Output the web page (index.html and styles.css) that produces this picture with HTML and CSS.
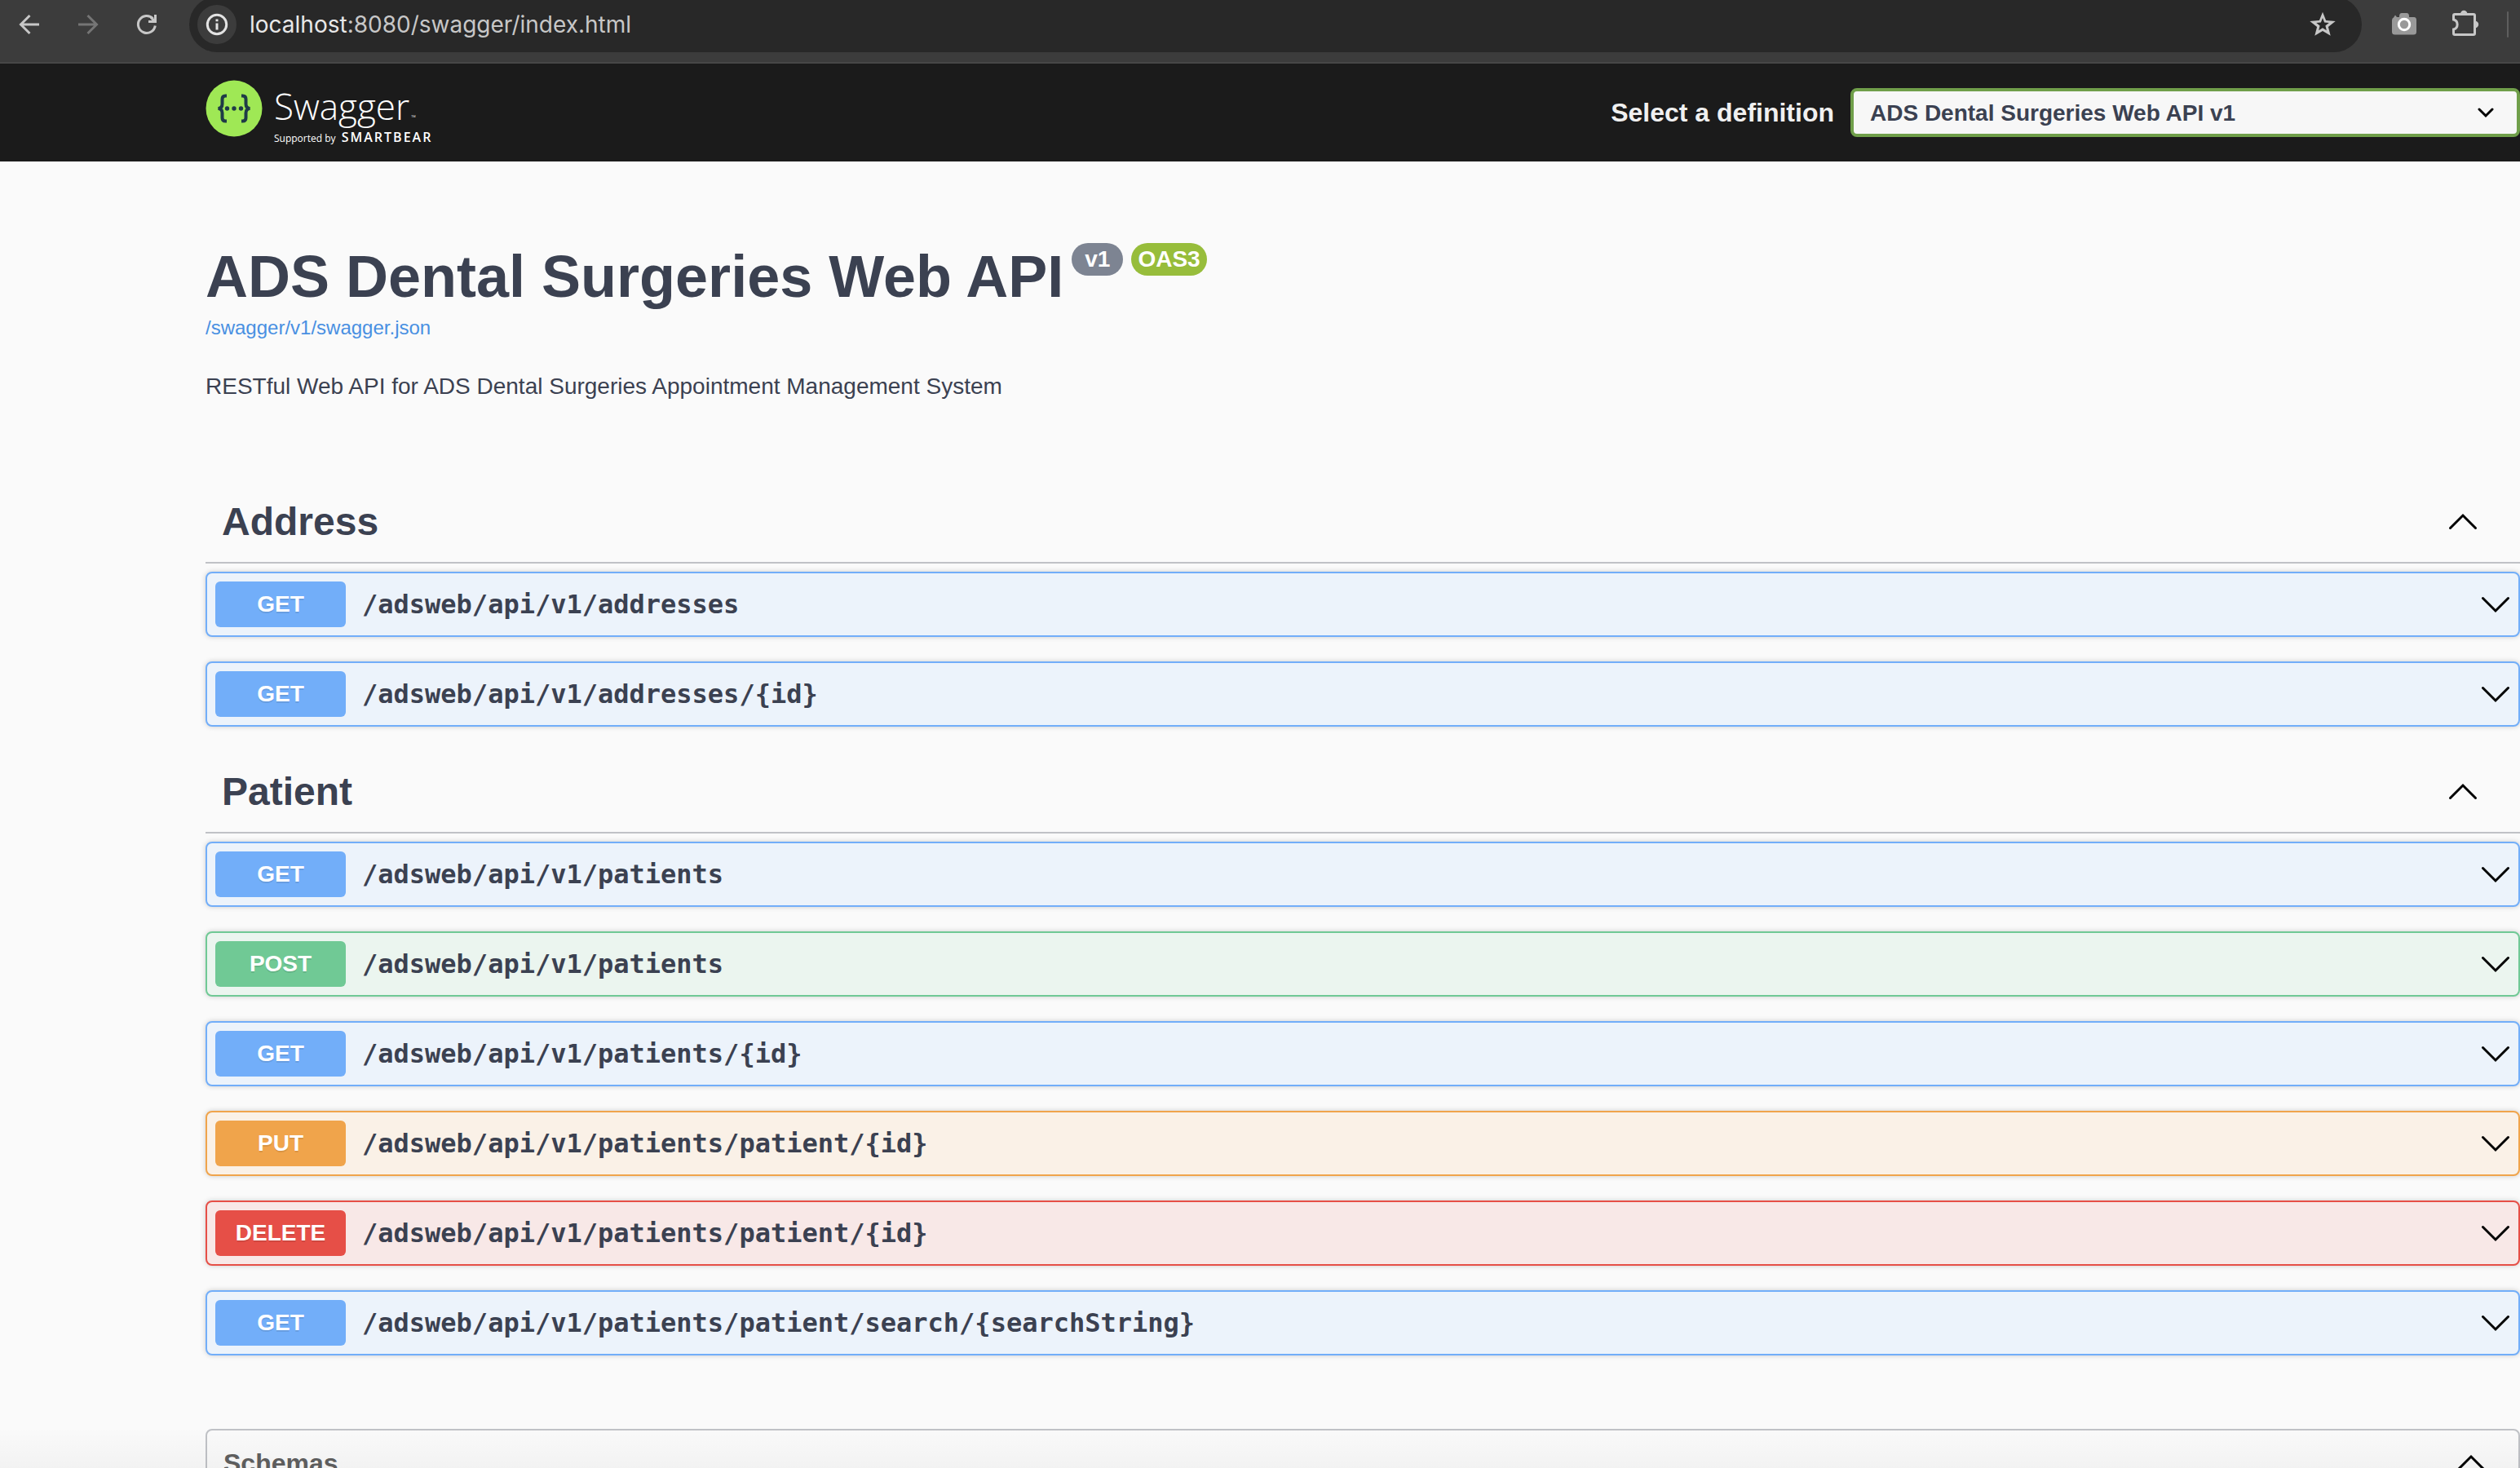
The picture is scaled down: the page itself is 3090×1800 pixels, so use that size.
FILE: index.html
```html
<!DOCTYPE html>
<html lang="en">
<head>
<meta charset="utf-8">
<title>Swagger UI</title>
<link rel="stylesheet" href="styles.css">
</head>
<body>
<svg class="sprite" aria-hidden="true">
  <symbol id="chevron" viewBox="0 0 40 40"><path d="M4.500 12.500 20 28 35.500 12.500"/></symbol>
</svg>

<div class="toolbar">
  <nav class="toolbar-nav">
    <button class="tool" aria-label="Back"><svg viewBox="0 0 32 32"><path d="M28 16H6M16.500 5 5.500 16l11 11"/></svg></button>
    <button class="tool tool-off" aria-label="Forward"><svg viewBox="0 0 32 32"><path d="M4 16h22M15.500 5l11 11-11 11"/></svg></button>
    <button class="tool" aria-label="Reload"><svg viewBox="0 0 32 32"><path d="M26.300 17.500A10.500 10.500 0 1 1 23.500 8.700"/><path class="solid" d="M25 4h3v10H18v-3h4.500L20 8.500l2-2 3 2.500Z"/></svg></button>
  </nav>
  <div class="omnibox">
    <button class="site-info" aria-label="Site information"><svg viewBox="0 0 32 32"><circle cx="16" cy="16" r="11.700"/><path d="M16 14.500v8M16 9.500v2.800"/></svg></button>
    <span class="url"><span class="url-host">localhost</span>:8080/swagger/index.html</span>
    <button class="tool" aria-label="Bookmark"><svg viewBox="0 0 32 32"><path class="solid" fill-rule="evenodd" d="M16 .700 20.100 11 31.700 11.900 22.900 19.100 25.700 29.800 16 24 6.300 29.800 9.100 19.100.300 11.900 11.900 11ZM16 8 13.900 13.400 8.200 13.900 12.600 17.600 11.200 23.300 16 20.300 20.800 23.300 19.400 17.600 23.800 13.900 18.100 13.400Z"/></svg></button>
  </div>
  <div class="extensions">
    <button class="tool" aria-label="Screenshot"><svg viewBox="0 0 32 32"><path class="camera" d="M1 11q0-3 2-3.500l2-3 2 2.500h3V6q0-4 3-4h6q3 0 3 4v1h6q3 0 3 3.500V25q0 3.500-3.500 3.500h-23Q1 28.500 1 25Z"/><circle class="lens" cx="16" cy="16" r="6.700"/></svg></button>
    <button class="tool tool-puzzle" aria-label="Extensions"><svg viewBox="0 0 36 36"><path d="M6 5.500h23q1.500 0 1.500 1.500v22q0 1.500-1.500 1.500H6q-1.500 0-1.500-1.500v-5a6.200 6.200 0 0 0 0-12V7q0-1.500 1.500-1.500Z"/><path class="solid" d="M13 5a4.200 4.200 0 0 1 8.400 0ZM31 13.800a4.200 4.200 0 0 1 0 8.400Z"/></svg></button>
    <span class="divider"></span>
  </div>
</div>

<div class="page">
  <header class="topbar">
    <a class="logo" href="#" aria-label="Swagger, supported by SmartBear">
      <svg class="logo-mark" viewBox="0 0 70 70"><circle class="disc" cx="35" cy="35" r="34.500"/>
        <path class="brace" d="M26 19.500h-1.500q-4 0-4 4v6q0 5-5 5.500 5 .500 5 5.500v6q0 4 4 4H26M44 19.500h1.500q4 0 4 4v6q0 5 5 5.500-5 .500-5 5.500v6q0 4-4 4H44"/>
        <g class="dots"><circle cx="26.500" cy="35" r="2.700"/><circle cx="35" cy="35" r="2.700"/><circle cx="43.500" cy="35" r="2.700"/></g></svg>
      <span class="logo-words">
        <span class="logo-name">Swagger<small>™</small></span>
        <span class="logo-by">Supported by <b>SMARTBEAR</b></span>
      </span>
    </a>
    <label class="definition-label" for="definition">Select a definition</label>
    <span class="select-wrap">
      <select id="definition"><option>ADS Dental Surgeries Web API v1</option></select>
      <svg class="select-arrow" viewBox="0 0 20 20"><path d="M2 6l8 8 8-8"/></svg>
    </span>
  </header>

  <main class="content">
    <section class="info">
      <h1>ADS Dental Surgeries Web API<span class="badges"><span class="badge">v1</span><span class="badge badge-oas">OAS3</span></span></h1>
      <a class="spec-link" href="#">/swagger/v1/swagger.json</a>
      <p>RESTful Web API for ADS Dental Surgeries Appointment Management System</p>
    </section>

    <section class="tag">
      <h2>Address<button class="toggle up" aria-label="Collapse Address"><svg><use href="#chevron"/></svg></button></h2>
      <div class="op get"><span class="method">GET</span><span class="path">/adsweb/api/v1/addresses</span><button class="toggle" aria-label="Expand"><svg><use href="#chevron"/></svg></button></div>
      <div class="op get"><span class="method">GET</span><span class="path">/adsweb/api/v1/addresses/{id}</span><button class="toggle" aria-label="Expand"><svg><use href="#chevron"/></svg></button></div>
    </section>

    <section class="tag">
      <h2>Patient<button class="toggle up" aria-label="Collapse Patient"><svg><use href="#chevron"/></svg></button></h2>
      <div class="op get"><span class="method">GET</span><span class="path">/adsweb/api/v1/patients</span><button class="toggle" aria-label="Expand"><svg><use href="#chevron"/></svg></button></div>
      <div class="op post"><span class="method">POST</span><span class="path">/adsweb/api/v1/patients</span><button class="toggle" aria-label="Expand"><svg><use href="#chevron"/></svg></button></div>
      <div class="op get"><span class="method">GET</span><span class="path">/adsweb/api/v1/patients/{id}</span><button class="toggle" aria-label="Expand"><svg><use href="#chevron"/></svg></button></div>
      <div class="op put"><span class="method">PUT</span><span class="path">/adsweb/api/v1/patients/patient/{id}</span><button class="toggle" aria-label="Expand"><svg><use href="#chevron"/></svg></button></div>
      <div class="op delete"><span class="method">DELETE</span><span class="path">/adsweb/api/v1/patients/patient/{id}</span><button class="toggle" aria-label="Expand"><svg><use href="#chevron"/></svg></button></div>
      <div class="op get"><span class="method">GET</span><span class="path">/adsweb/api/v1/patients/patient/search/{searchString}</span><button class="toggle" aria-label="Expand"><svg><use href="#chevron"/></svg></button></div>
    </section>

    <section class="schemas">
      <h3>Schemas<button class="toggle up" aria-label="Collapse Schemas"><svg><use href="#chevron"/></svg></button></h3>
    </section>
  </main>
</div>
</body>
</html>
```

FILE: styles.css
```css
* { box-sizing: border-box; }

body {
  margin: 0;
  height: 100vh;
  display: flex;
  flex-direction: column;
  overflow: hidden;
  background: #fafafa;
  color: #3b4151;
  font-family: "Liberation Sans", Arial, sans-serif;
}

h1, h2, h3, p { margin: 0; }

button {
  padding: 0;
  border: 0;
  background: none;
  color: inherit;
}

svg {
  display: block;
  fill: none;
  stroke: currentColor;
}

.sprite { display: none; }

/* Browser toolbar */
.toolbar {
  flex: none;
  display: flex;
  align-items: flex-start;
  height: 78px;
  background: #3c3c3c;
  border-bottom: 2px solid #474747;
  color: #c7c7c7;
}

.toolbar-nav {
  display: flex;
  gap: 40px;
  width: 232px;
  padding: 14px 20px;
}

.tool svg {
  height: 32px;
  width: 32px;
  stroke-width: 3;
}

.tool-off { color: #757575; }

.tool .solid { fill: currentColor; stroke: none; }

.omnibox {
  flex: 1;
  display: flex;
  align-items: center;
  height: 68px;
  margin-top: -4px;
  padding: 0 32px 0 10px;
  border-radius: 34px;
  background: #282828;
}

.site-info {
  width: 48px;
  height: 48px;
  margin-right: 16px;
  padding: 8px;
  border-radius: 50%;
  background: #3c3c3c;
  color: #e3e3e3;
}

.site-info svg { stroke-width: 3; }

.url {
  flex: 1;
  font: 28px/36px Inter, sans-serif;
}

.url-host { color: #e8e8e8; }

.extensions {
  display: flex;
  align-items: center;
  gap: 40px;
  width: 194px;
  padding: 12px 14px 12px 36px;
}

.tool-puzzle svg {
  width: 36px;
  height: 36px;
}

.camera { fill: #999; stroke: none; }

.lens { fill: #999; stroke: #fff; stroke-width: 3; }

.divider {
  width: 4px;
  height: 32px;
  margin-left: -6px;
  border-radius: 2px;
  background: #5e5e5e;
}

/* Swagger page */
.page {
  flex: 1;
  min-height: 0;
  overflow: hidden;
  position: relative;
}

.page::after {
  content: "";
  position: absolute;
  inset: auto 0 0;
  height: 50px;
  background: linear-gradient(transparent, rgba(0, 0, 0, 0.03));
}

.topbar {
  display: flex;
  align-items: center;
  height: 120px;
  padding-left: 252px;
  background: #1b1b1b;
}

.logo {
  display: flex;
  align-self: flex-start;
  gap: 14px;
  margin-right: auto;
  padding-top: 20px;
  color: #fff;
  text-decoration: none;
  font-family: "Open Sans", sans-serif;
}

.logo-mark { width: 70px; height: 70px; stroke: none; }
.logo-mark .brace { stroke: #1f3b47; stroke-width: 4; }
.disc { fill: #9fe855; }
.dots { fill: #1f3b47; }

.logo-words {
  display: flex;
  flex-direction: column;
  padding-top: 8px;
}

.logo-name { font-size: 44px; font-weight: 300; line-height: 48px; }
.logo-name small { font-size: 8px; line-height: 8px; margin-left: 2px; }
.logo-by { font-size: 12px; line-height: 28px; }
.logo-by b { margin-left: 4px; font-size: 16px; font-weight: 600; letter-spacing: 2px; }

.definition-label {
  margin-right: 20px;
  color: #f0f0f0;
  font-size: 32px;
  font-weight: bold;
}

.select-wrap {
  position: relative;
  width: 821px;
}

.select-wrap select {
  display: block;
  appearance: none;
  width: 100%;
  height: 60px;
  padding: 0 20px;
  border: 4px solid #709f4a;
  border-radius: 8px;
  background: #f7f7f7;
  color: #3b4151;
  font: bold 28px "Liberation Sans", Arial, sans-serif;
}

.select-arrow {
  position: absolute;
  right: 32px;
  top: 20px;
  width: 20px;
  height: 20px;
  color: #000;
  stroke-width: 3;
  stroke-linecap: round;
  pointer-events: none;
}

.content { padding-left: 252px; }

.info { padding: 100px 0 98px; }

.info h1 {
  display: flex;
  align-items: flex-start;
  font-size: 72px;
  line-height: 82px;
}

.badges {
  display: flex;
  gap: 10px;
  margin-left: 10px;
}

.badge {
  height: 40px;
  padding: 0 16px;
  border-radius: 20px;
  background: #7d8492;
  color: #fff;
  font-size: 28px;
  line-height: 40px;
}

.badge-oas { padding: 0 8px; background: #97bd3b; }

.spec-link {
  display: block;
  margin-top: 8px;
  color: #4990e2;
  font-size: 24px;
  line-height: 28px;
  text-decoration: none;
}

.info p {
  margin-top: 40px;
  font-size: 28px;
  line-height: 36px;
}

.tag h2 {
  display: flex;
  justify-content: space-between;
  align-items: center;
  margin-bottom: 10px;
  padding: 20px 50px 20px 20px;
  border-bottom: 2px solid rgba(59, 65, 81, 0.3);
  font-size: 48px;
  line-height: 59px;
}

.toggle {
  width: 40px;
  height: 40px;
  color: #000;
}

.toggle svg {
  width: 40px;
  height: 40px;
  stroke-width: 3;
  stroke-linecap: round;
}

.up svg { transform: rotate(180deg); }

.op {
  display: flex;
  align-items: center;
  height: 80px;
  margin-bottom: 30px;
  padding: 0 8px 0 10px;
  border: 2px solid;
  border-radius: 8px;
  box-shadow: 0 0 6px rgba(0, 0, 0, 0.19);
}

.method {
  width: 160px;
  border-radius: 6px;
  color: #fff;
  font-size: 28px;
  font-weight: bold;
  line-height: 56px;
  text-align: center;
  text-shadow: 0 2px 0 rgba(0, 0, 0, 0.1);
}

.path {
  flex: 1;
  padding-left: 20px;
  color: #3b4151;
  font: bold 32px/40px "DejaVu Sans Mono", monospace;
}

.get { border-color: #72aef9; background: #ecf3fb; }
.get .method { background: #72aef9; }
.post { border-color: #70c995; background: #ebf5ef; }
.post .method { background: #70c995; }
.put { border-color: #f0a44b; background: #faf1e7; }
.put .method { background: #f0a44b; }
.delete { border-color: #e64f47; background: #f8e8e7; }
.delete .method { background: #e64f47; }

.schemas {
  margin-top: 90px;
  border: 2px solid rgba(59, 65, 81, 0.3);
  border-radius: 8px;
}

.schemas h3 {
  display: flex;
  justify-content: space-between;
  align-items: center;
  padding: 20px 38px 20px 20px;
  color: #606060;
  font-size: 32px;
  line-height: 40px;
}
```
